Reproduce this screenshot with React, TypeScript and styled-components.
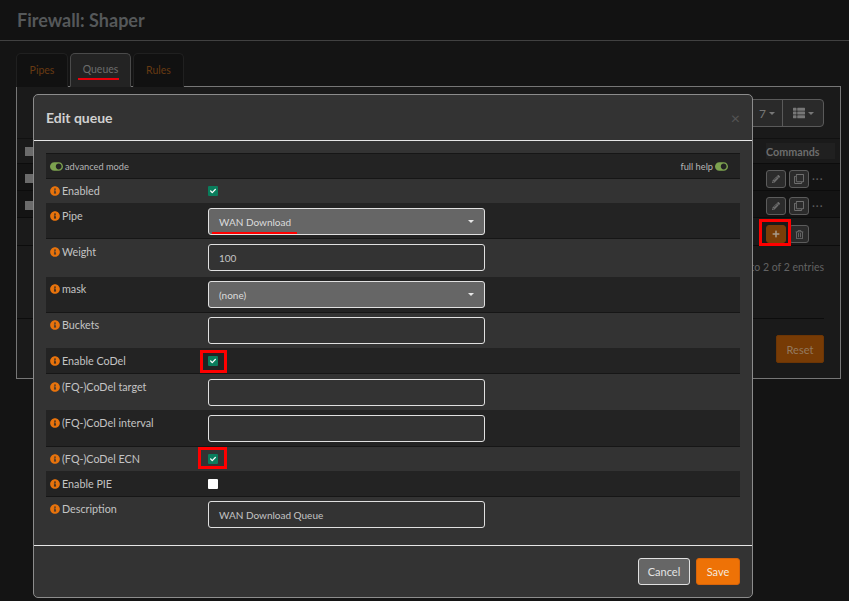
import { ReactNode } from 'react'
import styled, { createGlobalStyle } from 'styled-components'
import { FaCheck, FaInfoCircle, FaPencilAlt, FaPlus, FaRegClone, FaRegTrashAlt, FaThList, FaToggleOn } from 'react-icons/fa'

const GlobalStyle = createGlobalStyle`
  html, body {
    margin: 0;
    height: 601px;
    overflow: hidden;
    background: #141414;
    font-family: Lato, "Liberation Sans", sans-serif;
    font-size: 11px;
  }
  * { box-sizing: border-box; }
`

type Mark = { x: number; y: number; w: number; h: number }

type Field = {
  label: string
  height: number
  pad: number
  dark?: boolean
  kind: 'check' | 'off' | 'select' | 'input'
  value?: string
  mark?: Mark
  underline?: boolean
}

const fields: Field[] = [
  { label: 'Enabled', height: 24, pad: 4, kind: 'check' },
  { label: 'Pipe', height: 36, pad: 5, dark: true, kind: 'select', value: 'WAN Download', underline: true },
  { label: 'Weight', height: 38, pad: 5, kind: 'input', value: '100' },
  { label: 'mask', height: 36, pad: 4, dark: true, kind: 'select', value: '(none)' },
  { label: 'Buckets', height: 35, pad: 4, kind: 'input' },
  { label: 'Enable CoDel', height: 26, pad: 5, dark: true, kind: 'check', mark: { x: -8, y: -3, w: 27, h: 23 } },
  { label: '(FQ-)CoDel target', height: 36, pad: 5, kind: 'input' },
  { label: '(FQ-)CoDel interval', height: 37, pad: 5, dark: true, kind: 'input' },
  { label: '(FQ-)CoDel ECN', height: 24, pad: 4, kind: 'check', mark: { x: -10, y: -4, w: 29, h: 22 } },
  { label: 'Enable PIE', height: 26, pad: 5, dark: true, kind: 'off' },
  { label: 'Description', height: 36, pad: 4, kind: 'input', value: 'WAN Download Queue' },
]

const TableRowCommands = () => (
  <Commands>
    <SmallButton><FaPencilAlt size={8} /></SmallButton>
    <SmallButton><FaRegClone size={10} /></SmallButton>
    <Dots>···</Dots>
  </Commands>
)

const Marked = ({ children, mark }: { children: ReactNode; mark: Mark }) => (
  <MarkWrap>
    {children}
    <RedBox $x={mark.x} $y={mark.y} $w={mark.w} $h={mark.h} />
  </MarkWrap>
)

const App = () => {
  return (
    <>
      <GlobalStyle />
      <Header>
        <Title>Firewall: Shaper</Title>
      </Header>

      <Main>
        <Tabs>
          <Tab $width={52}>Pipes</Tab>
          <Tab $width={61} $active>
            Queues
            <TabMark />
          </Tab>
          <Tab $width={51}>Rules</Tab>
        </Tabs>

        <Panel>
          <Toolbar>
            <ButtonGroup>
              <GroupButton $width={36} $inset={6}>7<SmallCaret /></GroupButton>
              <GroupButton $width={41}><FaThList size={12} /><SmallCaret /></GroupButton>
            </ButtonGroup>
          </Toolbar>
          <HeadRow>
            <RowCheck />
            <HeadCell>Commands</HeadCell>
          </HeadRow>
          <TableRow $height={27} $pad={3} $dark>
            <RowCheck />
            <TableRowCommands />
          </TableRow>
          <TableRow $height={27} $pad={3} $dark>
            <RowCheck />
            <TableRowCommands />
          </TableRow>
          <TableRow $height={28} $pad={5}>
            <Commands>
              <AddButton>
                <FaPlus size={8} />
                <AddMark />
              </AddButton>
              <SmallButton><FaRegTrashAlt size={9} /></SmallButton>
            </Commands>
          </TableRow>
          <Entries>to 2 of 2 entries</Entries>
          <ResetArea>
            <ResetButton>Reset</ResetButton>
          </ResetArea>
        </Panel>
      </Main>

      <Modal>
        <ModalHeader>
          <ModalTitle>Edit queue</ModalTitle>
          <Close>×</Close>
        </ModalHeader>
        <ModalBody>
          <ModeRow>
            <Mode>
              <Toggle><FaToggleOn size={13} /></Toggle>
              advanced mode
            </Mode>
            <Mode>
              full help
              <Toggle><FaToggleOn size={13} /></Toggle>
            </Mode>
          </ModeRow>
          {fields.map((field) => (
            <FieldRow key={field.label} $height={field.height} $pad={field.pad} $dark={field.dark}>
              <FieldLabel>
                <InfoIcon><FaInfoCircle size={10} /></InfoIcon>
                {field.label}
              </FieldLabel>
              {field.kind === 'check' && !field.mark && <CheckBox $checked><FaCheck size={6} /></CheckBox>}
              {field.kind === 'check' && field.mark && (
                <Marked mark={field.mark}>
                  <CheckBox $checked><FaCheck size={6} /></CheckBox>
                </Marked>
              )}
              {field.kind === 'off' && <CheckBox />}
              {field.kind === 'select' && (
                <Select>
                  {field.value}
                  <Caret />
                  {field.underline && <SelectMark />}
                </Select>
              )}
              {field.kind === 'input' && <Input>{field.value}</Input>}
            </FieldRow>
          ))}
        </ModalBody>
        <ModalFooter>
          <CancelButton>Cancel</CancelButton>
          <SaveButton>Save</SaveButton>
        </ModalFooter>
      </Modal>
    </>
  )
}

export default App

const Header = styled.header`
  height: 41px;
  padding: 0 17px;
  display: flex;
  align-items: center;
  background: #121212;
  border-bottom: 1px solid #414141;
`
const Title = styled.h1`
  margin: 0;
  font-size: 18px;
  font-weight: 700;
  color: #55585a;
`
const Main = styled.main`
  padding: 12px 8px 0 16px;
`
const Tabs = styled.div`
  display: flex;
  gap: 2px;
  height: 34px;
  position: relative;
  z-index: 1;
  margin-bottom: -1px;
  font-size: 10.5px;
`
const Tab = styled.div<{ $width: number; $active?: boolean }>`
  position: relative;
  width: ${({ $width }) => $width}px;
  padding-bottom: 2px;
  display: flex;
  align-items: center;
  justify-content: center;
  border-radius: 5px 5px 0 0;
  border: 1px solid ${({ $active }) => ($active ? '#4a4a4a' : '#202020')};
  border-bottom: ${({ $active }) => ($active ? '1px solid #232323' : 'none')};
  background: ${({ $active }) => ($active ? '#232323' : '#111111')};
  color: ${({ $active }) => ($active ? '#6d6d6d' : '#683a12')};
`
const TabMark = styled.span`
  position: absolute;
  left: 7px;
  bottom: 6px;
  width: 41px;
  height: 2px;
  background: #e8000b;
`
const Panel = styled.section`
  height: 293px;
  border: 1px solid #767676;
  background: #1a1a1a;
`
const Toolbar = styled.div`
  height: 52px;
  padding: 12px 16px 0 0;
  display: flex;
  justify-content: flex-end;
  align-items: flex-start;
  border-bottom: 1px solid #111111;
`
const ButtonGroup = styled.div`
  display: flex;
  height: 28px;
  border: 1px solid #5a5a5a;
  border-radius: 4px;
  background: #2a2a2a;
`
const GroupButton = styled.div<{ $width: number; $inset?: number }>`
  width: ${({ $width }) => $width}px;
  padding-left: ${({ $inset }) => $inset ?? 0}px;
  display: flex;
  align-items: center;
  justify-content: center;
  gap: 3px;
  color: #777777;
  font-size: 12px;
  & + & { border-left: 1px solid #5a5a5a; }
`
const SmallCaret = styled.span`
  border-left: 3px solid transparent;
  border-right: 3px solid transparent;
  border-top: 3px solid #777777;
`
const HeadRow = styled.div`
  height: 25px;
  padding: 4px 5px 4px 8px;
  display: flex;
  justify-content: space-between;
  align-items: center;
  border-bottom: 1px solid #0c0c0c;
`
const HeadCell = styled.div`
  width: 69px;
  height: 16px;
  display: flex;
  align-items: center;
  background: #202020;
  font-size: 10.75px;
  font-weight: 700;
  color: #6d6d6d;
`
const TableRow = styled.div<{ $height: number; $pad: number; $dark?: boolean }>`
  height: ${({ $height }) => $height}px;
  padding: ${({ $pad }) => $pad}px 5px 0 8px;
  display: flex;
  justify-content: space-between;
  align-items: center;
  background: ${({ $dark }) => ($dark ? '#141414' : '#1a1a1a')};
  border-bottom: 1px solid #0c0c0c;
`
const RowCheck = styled.span`
  width: 9px;
  height: 9px;
  background: #6b6b6b;
`
const Commands = styled.div`
  width: 69px;
  margin-left: auto;
  display: flex;
  align-items: center;
  gap: 3px;
`
const SmallButton = styled.div`
  width: 20px;
  height: 18px;
  display: flex;
  align-items: center;
  justify-content: center;
  border: 1px solid #5c5c5c;
  border-radius: 3px;
  background: #2b2b2b;
  color: #6f6f6f;
`
const Dots = styled.span`
  color: #5d5d5d;
  font-size: 11px;
  letter-spacing: 1px;
`
const AddButton = styled(SmallButton)`
  position: relative;
  background: #7a3e08;
  border-color: #7a3e08;
  color: #a89a8a;
`
const AddMark = styled.span`
  position: absolute;
  left: -8px;
  top: -7px;
  width: 32px;
  height: 27px;
  border: 3px solid #ff0000;
`
const Entries = styled.div`
  padding: 15px 16px 0 0;
  text-align: right;
  font-size: 10.5px;
  color: #626262;
`
const ResetArea = styled.div`
  margin: 45px 16px 0 0;
  padding-top: 16px;
  display: flex;
  justify-content: flex-end;
  border-top: 1px solid #0c0c0c;
`
const ResetButton = styled.div`
  width: 48px;
  height: 28px;
  display: flex;
  align-items: center;
  justify-content: center;
  background: #773b05;
  border: 1px solid #6c3505;
  border-radius: 2px;
  color: #93795f;
`
const Modal = styled.div`
  position: absolute;
  left: 33px;
  top: 94px;
  width: 720px;
  height: 504px;
  display: flex;
  flex-direction: column;
  background: #333333;
  border: 1px solid #8c8c8c;
  border-radius: 5px;
`
const ModalHeader = styled.div`
  height: 46px;
  padding: 0 12px;
  display: flex;
  align-items: center;
  justify-content: space-between;
  border-bottom: 1px solid #e6e6e6;
`
const ModalTitle = styled.h4`
  margin: 0;
  font-size: 14px;
  font-weight: 700;
  color: #d0d0d0;
`
const Close = styled.span`
  color: #555555;
  font-size: 16px;
  font-weight: 400;
`
const ModalBody = styled.div`
  flex: 1;
  padding: 12px 12px 0;
`
const ModeRow = styled.div`
  height: 26px;
  padding: 0 12px 0 4px;
  display: flex;
  justify-content: space-between;
  align-items: center;
  background: #232323;
  border-top: 1px solid #161616;
  border-bottom: 1px solid #161616;
  font-size: 9.25px;
  color: #b5b5b5;
`
const Mode = styled.div`
  display: flex;
  align-items: center;
  gap: 2px;
`
const Toggle = styled.span`
  display: inline-flex;
  color: #7ca24f;
`
const FieldRow = styled.div<{ $height: number; $pad: number; $dark?: boolean }>`
  height: ${({ $height }) => $height}px;
  padding: ${({ $pad }) => $pad}px 0 0 4px;
  display: flex;
  align-items: flex-start;
  background: ${({ $dark }) => ($dark ? '#232323' : 'transparent')};
  border-bottom: 1px solid ${({ $dark }) => ($dark ? '#161616' : 'transparent')};
`
const FieldLabel = styled.div`
  width: 158px;
  display: flex;
  align-items: center;
  gap: 2px;
  padding-top: 1px;
  font-size: 10.75px;
  color: #c4c4c4;
`
const InfoIcon = styled.span`
  display: inline-flex;
  color: #e8730c;
`
const CheckBox = styled.span<{ $checked?: boolean }>`
  margin-top: 3px;
  width: 10px;
  height: 10px;
  display: flex;
  align-items: center;
  justify-content: center;
  border-radius: 1px;
  background: ${({ $checked }) => ($checked ? '#0a7d5c' : '#ffffff')};
  color: #ffffff;
`
const MarkWrap = styled.div`
  position: relative;
  display: flex;
`
const RedBox = styled.span<{ $x: number; $y: number; $w: number; $h: number }>`
  position: absolute;
  left: ${({ $x }) => $x}px;
  top: ${({ $y }) => $y}px;
  width: ${({ $w }) => $w}px;
  height: ${({ $h }) => $h}px;
  border: 3px solid #ff0000;
`
const Select = styled.div`
  position: relative;
  width: 277px;
  height: 27px;
  padding: 0 10px;
  display: flex;
  align-items: center;
  background: #666666;
  border: 1px solid #e0e0e0;
  border-radius: 3px;
  font-size: 10px;
  color: #dcdcdc;
`
const Caret = styled.span`
  position: absolute;
  right: 10px;
  top: 11px;
  border-left: 3.5px solid transparent;
  border-right: 3.5px solid transparent;
  border-top: 3.5px solid #e6e6e6;
`
const SelectMark = styled.span`
  position: absolute;
  left: 3px;
  bottom: 0;
  width: 85px;
  height: 2px;
  background: #ff0000;
`
const Input = styled(Select)`
  background: #333333;
  color: #c4c4c4;
`
const ModalFooter = styled.div`
  height: 52px;
  padding: 12px 12px 0;
  display: flex;
  justify-content: flex-end;
  align-items: flex-start;
  gap: 6px;
  border-top: 1px solid #e6e6e6;
`
const CancelButton = styled.div`
  width: 52px;
  height: 27px;
  display: flex;
  align-items: center;
  justify-content: center;
  background: #666666;
  border: 1px solid #e0e0e0;
  border-radius: 3px;
  color: #e4e4e4;
`
const SaveButton = styled(CancelButton)`
  width: 44px;
  background: #ee7206;
  border-color: #d7640a;
  color: #f4e8dc;
`
